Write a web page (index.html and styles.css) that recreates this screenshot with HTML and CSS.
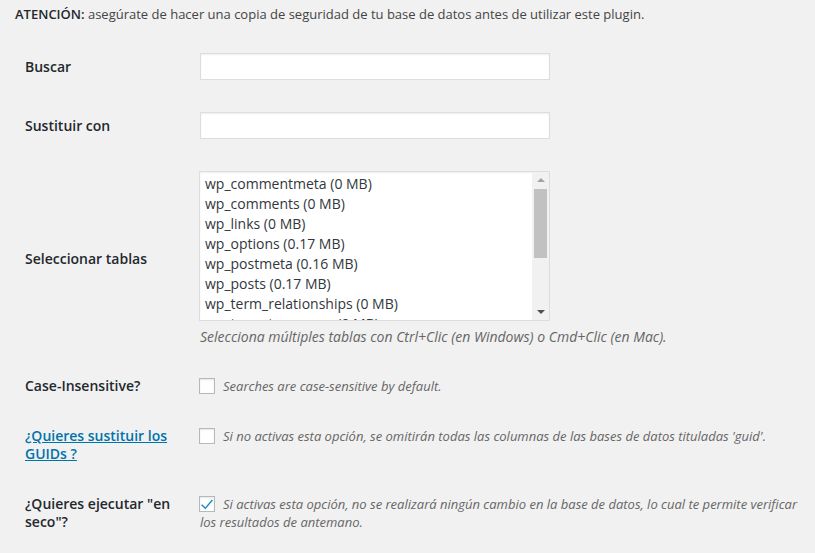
FILE: index.html
```html
<!DOCTYPE html>
<html lang="es">
<head>
<meta charset="utf-8">
<link rel="stylesheet" href="styles.css">
</head>
<body>
<div class="wrap">
  <p class="notice"><strong>ATENCIÓN:</strong> asegúrate de hacer una copia de seguridad de tu base de datos antes de utilizar este plugin.</p>

  <div class="row row-input row-first">
    <div class="label">Buscar</div>
    <div class="field"><div class="text-input"></div></div>
  </div>

  <div class="row row-input">
    <div class="label">Sustituir con</div>
    <div class="field"><div class="text-input"></div></div>
  </div>

  <div class="row row-select">
    <div class="label">Seleccionar tablas</div>
    <div class="field">
      <div class="select">
        <ul class="options">
          <li>wp_commentmeta (0 MB)</li>
          <li>wp_comments (0 MB)</li>
          <li>wp_links (0 MB)</li>
          <li>wp_options (0.17 MB)</li>
          <li>wp_postmeta (0.16 MB)</li>
          <li>wp_posts (0.17 MB)</li>
          <li>wp_term_relationships (0 MB)</li>
          <li class="partial">wp_term_taxonomy (0 MB)</li>
        </ul>
        <div class="scrollbar">
          <span class="arrow arrow-up"></span>
          <span class="thumb"></span>
          <span class="arrow arrow-down"></span>
        </div>
      </div>
      <p class="description desc-select">Selecciona múltiples tablas con Ctrl+Clic (en Windows) o Cmd+Clic (en Mac).</p>
    </div>
  </div>

  <div class="row row-check row-case">
    <div class="label">Case-Insensitive?</div>
    <div class="field"><span class="checkbox"></span><span class="description">Searches are case-sensitive by default.</span></div>
  </div>

  <div class="row row-check row-top">
    <div class="label"><a href="#" class="link">¿Quieres sustituir los GUIDs ?</a></div>
    <div class="field"><span class="checkbox"></span><span class="description">Si no activas esta opción, se omitirán todas las columnas de las bases de datos tituladas 'guid'.</span></div>
  </div>

  <div class="row row-check row-top">
    <div class="label">¿Quieres ejecutar "en seco"?</div>
    <div class="field"><span class="checkbox checked"><svg viewBox="0 0 16 16" width="16" height="16"><path d="M3.2 8.2 L6.3 11.3 L12.8 3.6 L13.9 4.6 L6.4 13.3 L2.1 9.3 Z" fill="#1e8cbe"/></svg></span><span class="description">Si activas esta opción, no se realizará ningún cambio en la base de datos, lo cual te permite verificar los resultados de antemano.</span></div>
  </div>
</div>
</body>
</html>
```

FILE: styles.css
```css
html, body {
  margin: 0;
  padding: 0;
  background: #f1f1f1;
}

body {
  font-family: "Open Sans", "Liberation Sans", sans-serif;
  font-size: 13px;
  color: #444;
}

.wrap {
  padding-left: 15px;
  width: 790px;
}

.notice {
  margin: 0;
  padding-top: 4px;
  line-height: 20px;
  font-size: 13px;
  color: #444;
}

.notice strong {
  font-weight: 600;
  color: #23282d;
}

.row {
  display: flex;
  align-items: center;
}

.label {
  width: 165px;
  padding-left: 10px;
  padding-right: 10px;
  flex-shrink: 0;
  font-size: 14px;
  font-weight: 600;
  line-height: 18px;
  color: #23282d;
}

.field {
  flex: 1;
  min-width: 0;
}

.row-input {
  height: 59px;
}

.row-first {
  margin-top: 13px;
}

.text-input {
  width: 348px;
  height: 25px;
  background: #fff;
  border: 1px solid #ddd;
  box-shadow: inset 0 1px 2px rgba(0, 0, 0, 0.07);
}

.row-select {
  padding-top: 16px;
  padding-bottom: 15px;
}

.select {
  position: relative;
  width: 349px;
  height: 148px;
  margin-left: -1px;
  background: #fff;
  border: 1px solid #ddd;
  box-shadow: inset 0 1px 2px rgba(0, 0, 0, 0.07);
  overflow: hidden;
  display: flex;
}

.options {
  list-style: none;
  margin: 0;
  padding: 2px 0 0 5px;
  flex: 1;
  height: 146px;
  overflow: hidden;
  font-size: 14px;
  line-height: 20px;
  color: #32373c;
  white-space: nowrap;
}

.scrollbar {
  width: 17px;
  background: #f1f1f1;
  position: relative;
  flex-shrink: 0;
}

.arrow {
  position: absolute;
  left: 5px;
  width: 0;
  height: 0;
  border-left: 4px solid transparent;
  border-right: 4px solid transparent;
}

.arrow-up {
  top: 6px;
  border-bottom: 4px solid #a3a3a3;
}

.arrow-down {
  bottom: 6px;
  border-top: 4px solid #505050;
}

.thumb {
  position: absolute;
  left: 2px;
  right: 2px;
  top: 17px;
  height: 69px;
  background: #c1c1c1;
}

.description {
  font-size: 13px;
  font-style: italic;
  color: #666;
  line-height: 18px;
}

.desc-select {
  margin: 7px 0 0;
  font-size: 14px;
}

.row-check .field {
  line-height: 18px;
}

.row-case {
  padding-top: 16px;
  padding-bottom: 16px;
}

.row-top {
  align-items: flex-start;
  padding-top: 16px;
  padding-bottom: 16px;
}

.checkbox {
  display: inline-block;
  box-sizing: border-box;
  width: 16px;
  height: 16px;
  margin: 0 8px 0 -1px;
  vertical-align: -3px;
  background: #fff;
  border: 1px solid #b4b9be;
  box-shadow: inset 0 1px 2px rgba(0, 0, 0, 0.1);
  position: relative;
}

.checkbox svg {
  position: absolute;
  left: -1px;
  top: -1px;
}

.link {
  color: #0073aa;
  text-decoration: underline;
}
```
